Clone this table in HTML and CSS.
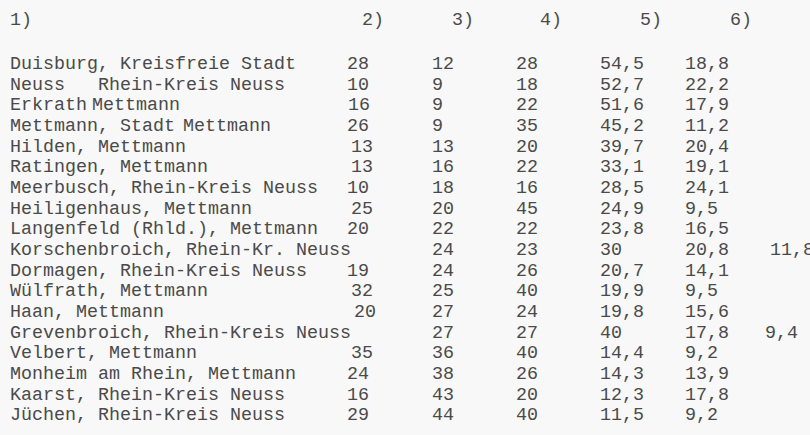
FILE: index.html
```html
<!DOCTYPE html>
<html lang="de">
<head>
<meta charset="utf-8">
<title>Tabelle</title>
<link rel="stylesheet" href="styles.css">
</head>
<body>
<div class="sheet">
  <div class="head">
    <span>1)</span><span>2)</span><span>3)</span><span>4)</span><span>5)</span><span>6)</span>
  </div>
  <div class="rows">
    <div class="row"><span>Duisburg, Kreisfreie Stadt</span><span>28</span><span>12</span><span>28</span><span>54,5</span><span>18,8</span></div>
    <div class="row"><span>Neuss   Rhein-Kreis Neuss</span><span>10</span><span>9</span><span>18</span><span>52,7</span><span>22,2</span></div>
    <div class="row"><span>Erkrath<span class="gap6"> </span>Mettmann</span><span class="s1">16</span><span>9</span><span>22</span><span>51,6</span><span>17,9</span></div>
    <div class="row"><span>Mettmann, Stadt<span class="gap3"> </span>Mettmann</span><span>26</span><span>9</span><span>35</span><span>45,2</span><span>11,2</span></div>
    <div class="row"><span>Hilden, Mettmann</span><span class="s4">13</span><span>13</span><span>20</span><span>39,7</span><span>20,4</span></div>
    <div class="row"><span>Ratingen, Mettmann</span><span class="s4">13</span><span>16</span><span>22</span><span>33,1</span><span>19,1</span></div>
    <div class="row"><span>Meerbusch, Rhein-Kreis Neuss</span><span>10</span><span>18</span><span>16</span><span>28,5</span><span>24,1</span></div>
    <div class="row"><span>Heiligenhaus, Mettmann</span><span class="s4">25</span><span>20</span><span>45</span><span>24,9</span><span>9,5</span></div>
    <div class="row"><span>Langenfeld (Rhld.), Mettmann</span><span>20</span><span>22</span><span>22</span><span>23,8</span><span>16,5</span></div>
    <div class="row"><span class="wide">Korschenbroich, Rhein-Kr. Neuss</span><span>24</span><span>23</span><span>30</span><span>20,8</span><span class="s5">11,8</span></div>
    <div class="row"><span>Dormagen, Rhein-Kreis Neuss</span><span>19</span><span>24</span><span>26</span><span>20,7</span><span>14,1</span></div>
    <div class="row"><span>Wülfrath, Mettmann</span><span class="s4">32</span><span>25</span><span>40</span><span>19,9</span><span>9,5</span></div>
    <div class="row"><span>Haan, Mettmann</span><span class="s7">20</span><span>27</span><span>24</span><span>19,8</span><span>15,6</span></div>
    <div class="row"><span class="wide">Grevenbroich, Rhein-Kreis Neuss</span><span>27</span><span>27</span><span>40</span><span>17,8</span><span>9,4</span></div>
    <div class="row"><span>Velbert, Mettmann</span><span class="s4">35</span><span>36</span><span>40</span><span>14,4</span><span>9,2</span></div>
    <div class="row"><span>Monheim am Rhein, Mettmann</span><span>24</span><span>38</span><span>26</span><span>14,3</span><span>13,9</span></div>
    <div class="row"><span>Kaarst, Rhein-Kreis Neuss</span><span>16</span><span>43</span><span>20</span><span>12,3</span><span>17,8</span></div>
    <div class="row"><span>Jüchen, Rhein-Kreis Neuss</span><span>29</span><span>44</span><span>40</span><span>11,5</span><span>9,2</span></div>
  </div>
</div>
</body>
</html>
```

FILE: styles.css
```css
html, body {
  margin: 0;
  padding: 0;
  background: #f8f8f8;
}

body {
  width: 810px;
  height: 435px;
  overflow: hidden;
}

.sheet {
  padding: 11px 0 0 10px;
  font-family: "Liberation Mono", "Courier New", monospace;
  font-size: 18.33px;
  line-height: 20.65px;
  color: #4a4a4a;
}

.head {
  display: grid;
  grid-template-columns: 352px 90px 88px 100px 90px auto;
  margin-bottom: 23.5px;
}

.rows {
  display: flex;
  flex-direction: column;
}

.row {
  display: grid;
  grid-template-columns: 337px 85px 84px 84px 85px 80px auto;
}

.row > span {
  white-space: pre;
}

.row .wide {
  grid-column: span 2;
}

.s1 { padding-left: 1px; }
.s4 { padding-left: 4px; }
.s5 { padding-left: 5px; }
.s7 { padding-left: 7px; }

.gap6 { letter-spacing: -6px; }
.gap3 { letter-spacing: -3px; }
```
